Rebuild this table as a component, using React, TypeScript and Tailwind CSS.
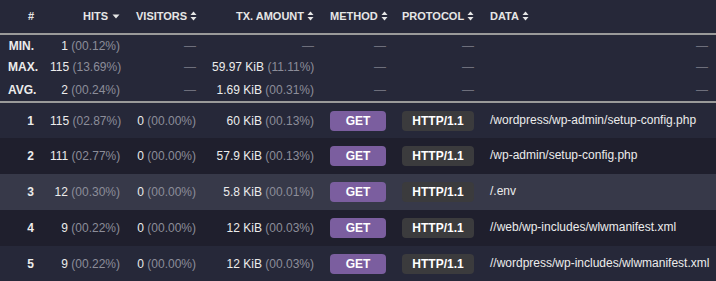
import React from "react";

type Row = {
  n: number;
  hits: string;
  hitsPct: string;
  visitors: string;
  visitorsPct: string;
  tx: string;
  txPct: string;
  method: string;
  protocol: string;
  data: string;
};

const rows: Row[] = [
  { n: 1, hits: "115", hitsPct: "(02.87%)", visitors: "0", visitorsPct: "(00.00%)", tx: "60 KiB", txPct: "(00.13%)", method: "GET", protocol: "HTTP/1.1", data: "/wordpress/wp-admin/setup-config.php" },
  { n: 2, hits: "111", hitsPct: "(02.77%)", visitors: "0", visitorsPct: "(00.00%)", tx: "57.9 KiB", txPct: "(00.13%)", method: "GET", protocol: "HTTP/1.1", data: "/wp-admin/setup-config.php" },
  { n: 3, hits: "12", hitsPct: "(00.30%)", visitors: "0", visitorsPct: "(00.00%)", tx: "5.8 KiB", txPct: "(00.01%)", method: "GET", protocol: "HTTP/1.1", data: "/.env" },
  { n: 4, hits: "9", hitsPct: "(00.22%)", visitors: "0", visitorsPct: "(00.00%)", tx: "12 KiB", txPct: "(00.03%)", method: "GET", protocol: "HTTP/1.1", data: "//web/wp-includes/wlwmanifest.xml" },
  { n: 5, hits: "9", hitsPct: "(00.22%)", visitors: "0", visitorsPct: "(00.00%)", tx: "12 KiB", txPct: "(00.03%)", method: "GET", protocol: "HTTP/1.1", data: "//wordpress/wp-includes/wlwmanifest.xml" },
];

// row 3 is the hovered one, 2 and 4 are striped
const rowBg = ["bg-[#262839]", "bg-[#1f1f2d]", "bg-[#373949]", "bg-[#1f1f2d]", "bg-[#262839]"];

function SortBoth() {
  return (
    <svg width="7" height="10" viewBox="0 0 7 10" className="inline-block ml-[3px] -mt-[2px] align-middle">
      <path d="M3.5 0.5 L6.5 4 L0.5 4 Z" fill="#e6e6e6" />
      <path d="M0.5 6 L6.5 6 L3.5 9.5 Z" fill="#e6e6e6" />
    </svg>
  );
}

function SortDown() {
  return (
    <svg width="8" height="5" viewBox="0 0 8 5" className="inline-block ml-[4px] -mt-[2px] align-middle">
      <path d="M0.5 0.5 L7.5 0.5 L4 4.5 Z" fill="#e6e6e6" />
    </svg>
  );
}

function Dash() {
  return <span className="text-[#6e6f7c]">—</span>;
}

function Pct({ v, p }: { v: string; p: string }) {
  return (
    <>
      <span className="text-[#ececec]">{v}</span>{" "}
      <span className="text-[#8c8d99]">{p}</span>
    </>
  );
}

const th = "px-2 whitespace-nowrap border-b-2 border-[#9a9a9a]";
const sum = "px-2 text-right whitespace-nowrap";
const sumLast = "border-b-2 border-[#9a9a9a]";

export default function App() {
  return (
    <div
      className="w-[716px] h-[281px] overflow-hidden bg-[#262839] text-[12px] text-[#ececec]"
      style={{ fontFamily: '"Liberation Sans", Arial, sans-serif' }}
    >
      <table className="w-full table-fixed border-collapse">
        <colgroup>
          <col className="w-[42px]" />
          <col className="w-[86px]" />
          <col className="w-[76px]" />
          <col className="w-[118px]" />
          <col className="w-[72px]" />
          <col className="w-[88px]" />
          <col />
        </colgroup>
        <thead>
          <tr className="h-[34px] text-[11px] font-bold text-[#e6e6e6]">
            <th className={`${th} text-right`}>#</th>
            <th className={`${th} text-right`}>
              HITS
              <SortDown />
            </th>
            <th className={`${th} text-right`}>
              VISITORS
              <SortBoth />
            </th>
            <th className={`${th} text-right`}>
              TX. AMOUNT
              <SortBoth />
            </th>
            <th className={`${th} text-left`}>
              METHOD
              <SortBoth />
            </th>
            <th className={`${th} text-left`}>
              PROTOCOL
              <SortBoth />
            </th>
            <th className={`${th} text-left`}>
              DATA
              <SortBoth />
            </th>
          </tr>
        </thead>
        <tbody>
          <tr className="h-[22px]">
            <td className={`${sum} font-bold`}>MIN.</td>
            <td className={sum}><Pct v="1" p="(00.12%)" /></td>
            <td className={sum}><Dash /></td>
            <td className={sum}><Dash /></td>
            <td className={sum}><Dash /></td>
            <td className={sum}><Dash /></td>
            <td className={sum}><Dash /></td>
          </tr>
          <tr className="h-[22px]">
            <td className={`${sum} font-bold`}>MAX.</td>
            <td className={sum}><Pct v="115" p="(13.69%)" /></td>
            <td className={sum}><Dash /></td>
            <td className={sum}><Pct v="59.97 KiB" p="(11.11%)" /></td>
            <td className={sum}><Dash /></td>
            <td className={sum}><Dash /></td>
            <td className={sum}><Dash /></td>
          </tr>
          <tr className="h-[24px]">
            <td className={`${sum} ${sumLast} font-bold`}>AVG.</td>
            <td className={`${sum} ${sumLast}`}><Pct v="2" p="(00.24%)" /></td>
            <td className={`${sum} ${sumLast}`}><Dash /></td>
            <td className={`${sum} ${sumLast}`}><Pct v="1.69 KiB" p="(00.31%)" /></td>
            <td className={`${sum} ${sumLast}`}><Dash /></td>
            <td className={`${sum} ${sumLast}`}><Dash /></td>
            <td className={`${sum} ${sumLast}`}><Dash /></td>
          </tr>
        </tbody>
        <tbody>
          {rows.map((r, i) => (
            <tr key={r.n} className={`h-[36px] ${rowBg[i]}`}>
              <td className="px-2 text-right font-bold">{r.n}</td>
              <td className="px-2 text-right whitespace-nowrap"><Pct v={r.hits} p={r.hitsPct} /></td>
              <td className="px-2 text-right whitespace-nowrap"><Pct v={r.visitors} p={r.visitorsPct} /></td>
              <td className="px-2 text-right whitespace-nowrap"><Pct v={r.tx} p={r.txPct} /></td>
              <td className="px-2">
                <span className="flex h-[20px] w-[56px] items-center justify-center rounded-[4px] bg-[#7b5e9f] font-bold text-white">
                  {r.method}
                </span>
              </td>
              <td className="px-2">
                <span className="flex h-[20px] w-[72px] items-center justify-center rounded-[4px] bg-[#3b3b3d] font-bold text-white">
                  {r.protocol}
                </span>
              </td>
              <td className="px-2 whitespace-nowrap pb-[2px]">{r.data}</td>
            </tr>
          ))}
        </tbody>
      </table>
    </div>
  );
}
